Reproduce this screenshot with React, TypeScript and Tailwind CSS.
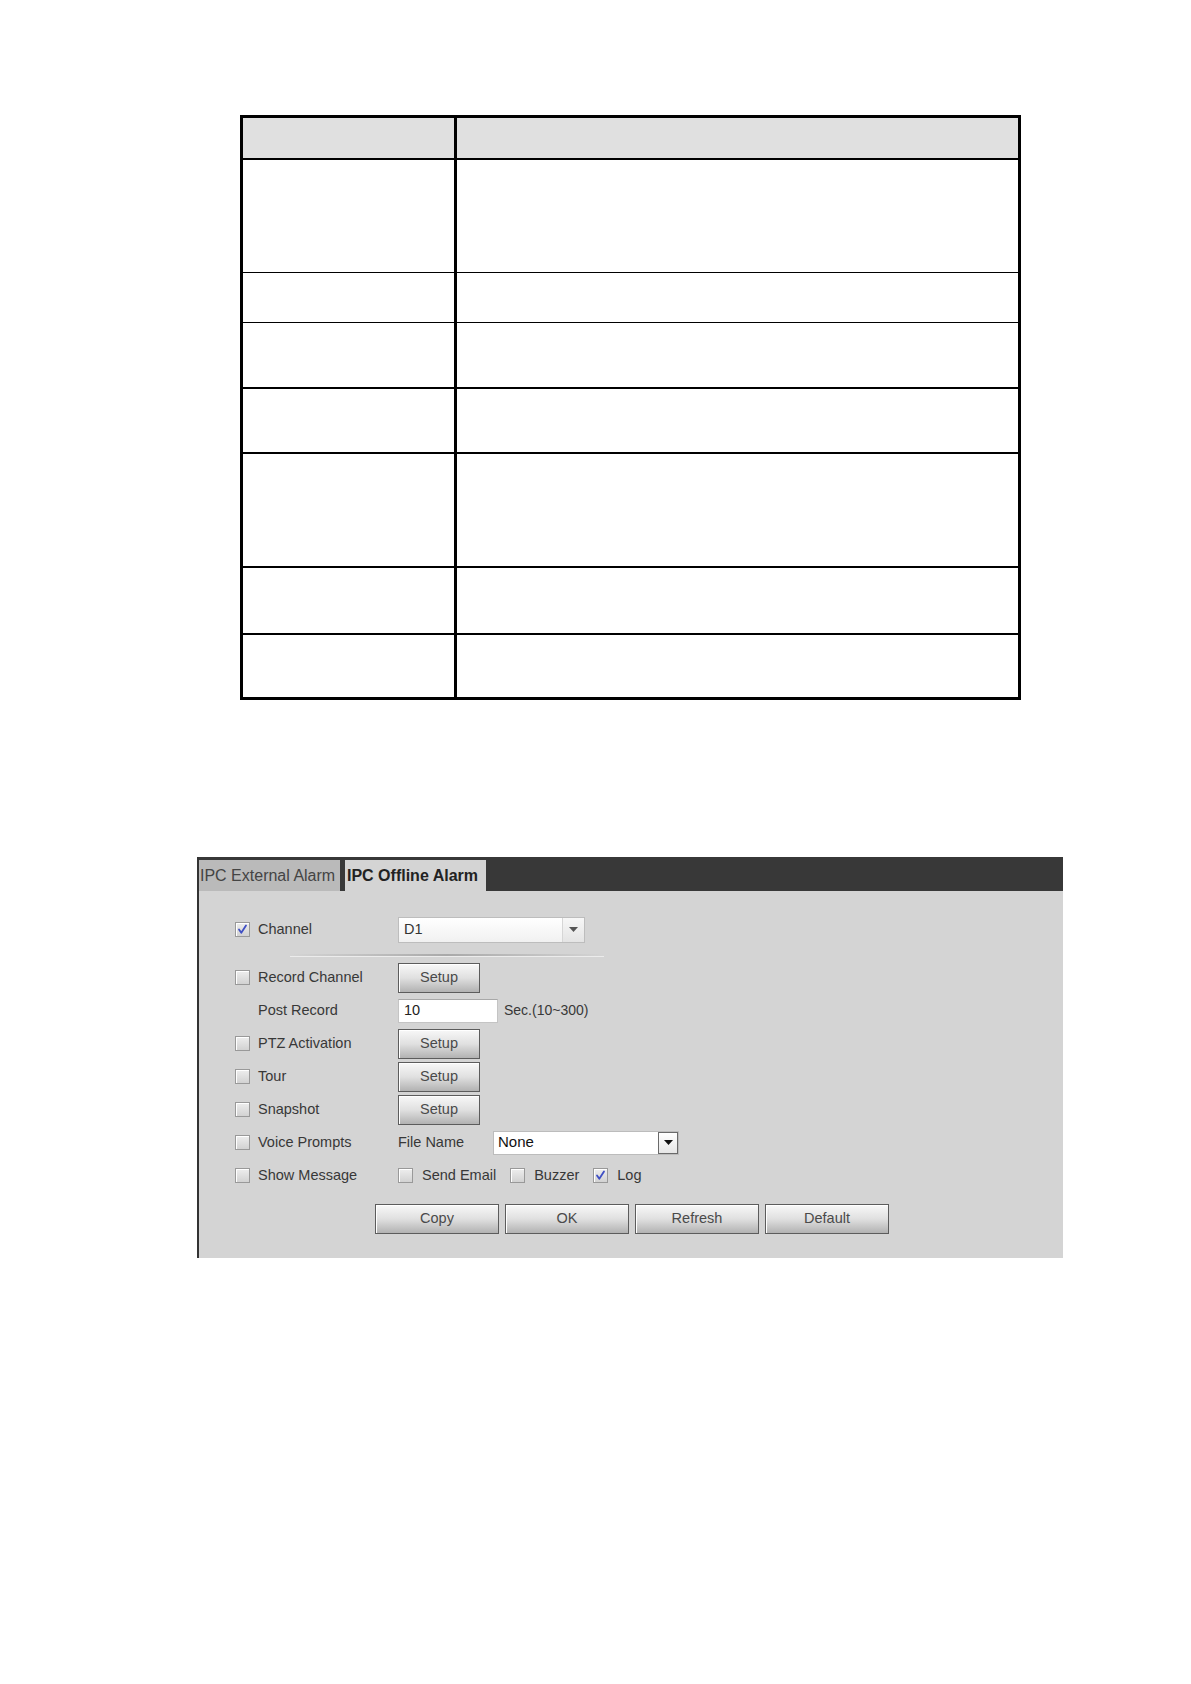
import React from 'react';

const font = { fontFamily: '"Liberation Sans", Arial, sans-serif' };

const rows = [
  { h: 'h-[42px]', b: 'border-b-2' },
  { h: 'h-[113px]', b: 'border-b' },
  { h: 'h-[50px]', b: 'border-b' },
  { h: 'h-[66px]', b: 'border-b-2' },
  { h: 'h-[65px]', b: 'border-b-2' },
  { h: 'h-[114px]', b: 'border-b-2' },
  { h: 'h-[67px]', b: 'border-b-2' },
  { h: 'h-[62px]', b: '' },
];

function Check({ checked = false }: { checked?: boolean }) {
  return (
    <span className="relative flex h-[15px] w-[15px] shrink-0 items-center justify-center border border-[#999999] bg-linear-to-b from-[#eeeeee] to-[#d2d2d2] shadow-[inset_1px_1px_0_#ffffff]">
      {checked && (
        <svg width="11" height="11" viewBox="0 0 11 11" className="absolute left-[1px] top-[1px]">
          <path d="M2 5.5 L4.3 8.8 L9 1.5" fill="none" stroke="#3f4fc4" strokeWidth="1.8" strokeLinecap="round" strokeLinejoin="round" />
        </svg>
      )}
    </span>
  );
}

function SetupButton({ label = 'Setup', w = 'w-[82px]' }: { label?: string; w?: string }) {
  return (
    <button className={`${w} flex h-[30px] items-center justify-center border border-[#5c5c5c] bg-linear-to-b from-[#f8f8f8] via-[#e0e0e0] to-[#b2b2b2] text-[14.5px] text-[#4a4a4a] shadow-[inset_1px_1px_0_#ffffff]`}>
      {label}
    </button>
  );
}

function Row({ checked, hasBox = true, label, children }: { checked?: boolean; hasBox?: boolean; label: string; children?: React.ReactNode }) {
  return (
    <div className="flex h-[33px] items-center">
      <div className="flex w-[163px] items-center gap-[8px]">
        {hasBox ? <Check checked={checked} /> : <span className="w-[15px]" />}
        <span className="text-[14.5px] text-[#383838]">{label}</span>
      </div>
      {children}
    </div>
  );
}

export default function App() {
  return (
    <div className="min-h-[1684px] w-[1191px] bg-white" style={font}>
      <div className="pt-[115px]">
        <div className="ml-[240px] box-border w-[781px] border-[3px] border-black">
          {rows.map((r, i) => (
            <div key={i} className={`flex box-border ${r.h} ${r.b} border-black ${i === 0 ? 'bg-[#e0e0e0]' : 'bg-white'}`}>
              <div className="box-border w-[214px] border-r-[3px] border-black" />
              <div className="flex-1" />
            </div>
          ))}
        </div>
      </div>

      <div className="ml-[197px] mt-[157px] w-[866px] border-l-2 border-[#333333] bg-[#d4d4d4]">
        <div className="flex h-[34px] items-end gap-[5px] bg-[#383838]">
          <div className="flex h-[31px] w-[141px] items-center bg-[#bababa] pl-[1px] text-[16px] text-[#444444]">
            IPC External Alarm
          </div>
          <div className="flex h-[31px] w-[141px] items-center bg-[#d4d4d4] pl-[2px] text-[16px] font-bold text-[#222222]">
            IPC Offline Alarm
          </div>
        </div>

        <div className="pl-[36px] pt-[22px] pb-[24px]">
          <Row checked label="Channel">
            <div className="flex h-[26px] w-[187px] border border-[#bdbdbd] bg-linear-to-b from-[#ffffff] to-[#f1f1f1]">
              <span className="flex flex-1 items-center pl-[5px] text-[14.5px] text-[#333333]">D1</span>
              <span className="flex w-[22px] items-center justify-center border-l border-[#d6d6d6] bg-linear-to-b from-[#f7f7f7] to-[#e4e4e4]">
                <svg width="9" height="5" viewBox="0 0 9 5">
                  <path d="M0 0 H9 L4.5 5 Z" fill="#555555" />
                </svg>
              </span>
            </div>
          </Row>

          <div className="h-[15px] pt-[8px]">
            <div className="ml-[55px] h-[2px] w-[314px] bg-linear-to-r from-transparent via-[#a9a9a9] to-transparent shadow-[0_1px_0_#ececec]" />
          </div>

          <Row label="Record Channel">
            <SetupButton />
          </Row>
          <Row hasBox={false} label="Post Record">
            <div className="flex h-[24px] w-[100px] items-center border border-[#c4c4c4] border-t-[#a8a8a8] bg-white pl-[5px] text-[14.5px] text-[#222222]">
              10
            </div>
            <span className="ml-[6px] text-[14px] text-[#383838]">Sec.(10~300)</span>
          </Row>
          <Row label="PTZ Activation">
            <SetupButton />
          </Row>
          <Row label="Tour">
            <SetupButton />
          </Row>
          <Row label="Snapshot">
            <SetupButton />
          </Row>
          <Row label="Voice Prompts">
            <span className="w-[95px] text-[14.5px] text-[#383838]">File Name</span>
            <div className="flex h-[24px] w-[186px] items-stretch border border-[#bcbcbc] bg-white">
              <span className="flex flex-1 items-center pl-[4px] text-[15px] text-[#111111]">None</span>
              <span className="flex w-[20px] items-center justify-center border border-[#6a6a6a] bg-linear-to-b from-[#ffffff] to-[#e6e6e6]">
                <svg width="9" height="5" viewBox="0 0 9 5">
                  <path d="M0 0 H9 L4.5 5 Z" fill="#111111" />
                </svg>
              </span>
            </div>
          </Row>
          <Row label="Show Message">
            <div className="flex items-center">
              <Check />
              <span className="ml-[9px] text-[14.5px] text-[#383838]">Send Email</span>
              <span className="ml-[14px]">
                <Check />
              </span>
              <span className="ml-[9px] text-[14.5px] text-[#383838]">Buzzer</span>
              <span className="ml-[14px]">
                <Check checked />
              </span>
              <span className="ml-[9px] text-[14.5px] text-[#383838]">Log</span>
            </div>
          </Row>

          <div className="ml-[140px] mt-[12px] flex gap-[6px]">
            <SetupButton label="Copy" w="w-[124px]" />
            <SetupButton label="OK" w="w-[124px]" />
            <SetupButton label="Refresh" w="w-[124px]" />
            <SetupButton label="Default" w="w-[124px]" />
          </div>
        </div>
      </div>
    </div>
  );
}
